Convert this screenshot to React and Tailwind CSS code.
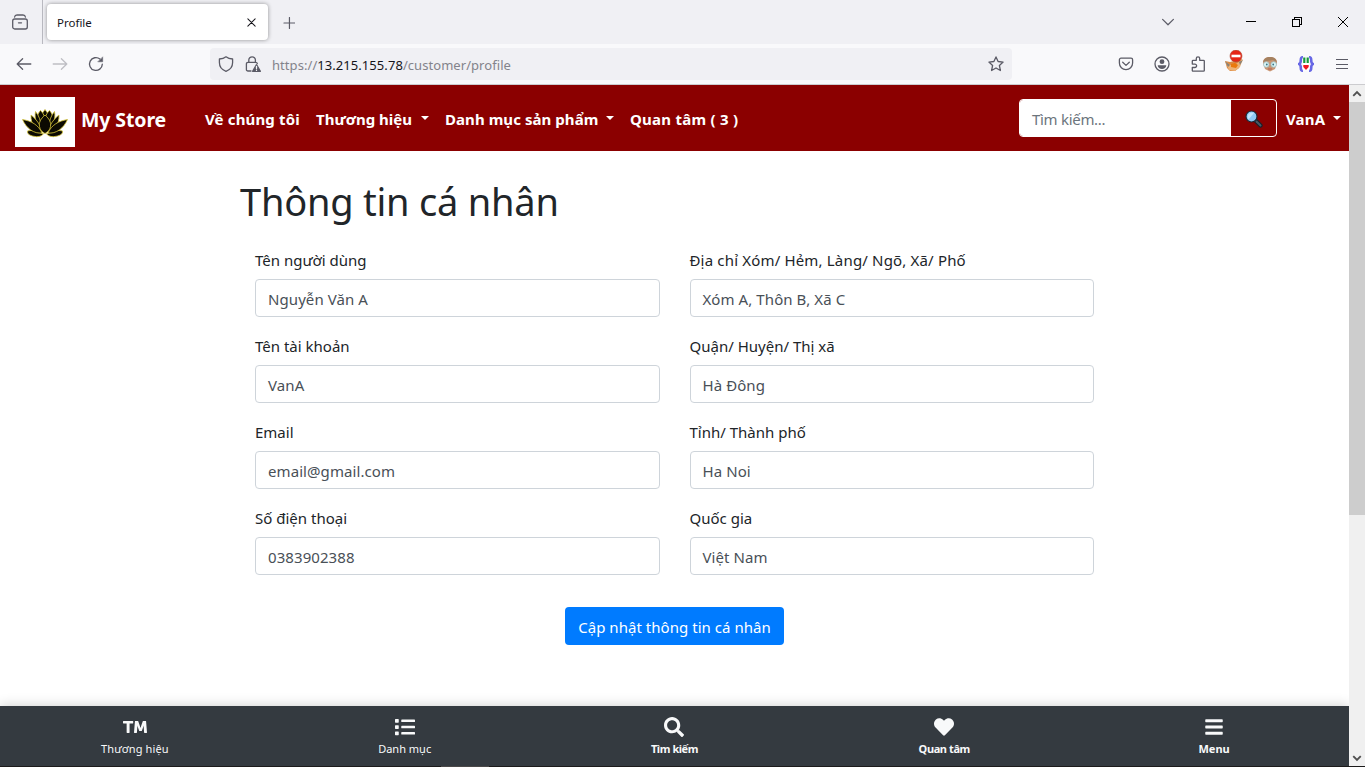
import React from "react";
import { FaTrademark, FaList, FaSearch, FaHeart, FaBars } from "react-icons/fa";

const svgBase = { fill: "none", strokeLinecap: "round", strokeLinejoin: "round" };

function Glyph({ children, className = "w-4 h-4", width = 1.3 }) {
  return (
    <svg viewBox="0 0 16 16" className={"block shrink-0 " + className} stroke="currentColor" strokeWidth={width} {...svgBase}>
      {children}
    </svg>
  );
}

function TabStrip() {
  return (
    <div className="flex h-11 shrink-0 items-center bg-[#f0f0f4] text-[#5b5b66]">
      <div className="flex h-full w-[43px] shrink-0 items-center border-r border-[#b9b9c0] pl-3">
        <Glyph>
          <rect x="0.7" y="5" width="14.6" height="10" rx="2" />
          <path d="M2.6 3C2.800 1.600 3.600 1 5 1h6c1.400 0 2.200.6 2.400 2M6.500 8.800h3" />
        </Glyph>
      </div>
      <div className="ml-[4px] flex h-9 w-[221px] shrink-0 items-center rounded bg-white pl-2.5 pr-3 text-[#15141a] shadow-[0_0_4px_rgba(0,0,0,0.4)]">
        <span className="grow pt-0.5 text-[11.5px] leading-4">Profile</span>
        <Glyph className="h-[9px] w-[9px]" width={1.8}>
          <path d="M1.500 1.500l13 13M14.500 1.500l-13 13" />
        </Glyph>
      </div>
      <Glyph className="ml-[15px] mt-0.5 w-3 h-3" width={1.600}>
        <path d="M8.600 0.700v14.600M1.300 8h14.600" />
      </Glyph>
      <div className="grow" />
      <Glyph className="mr-[72px] w-3 h-3" width={1.6}>
        <path d="M0.800 4.500L8 11.700l7.200-7.200" />
      </Glyph>
      <div className="flex w-[119px] shrink-0 items-center justify-between pr-[17px] text-black">
        <svg viewBox="0 0 10 10" className="h-2.5 w-2.5" stroke="currentColor" fill="none" shapeRendering="crispEdges">
          <path d="M0 4.500h10" />
        </svg>
        <svg viewBox="0 0 10 10" className="h-2.5 w-2.5" stroke="currentColor" fill="none" shapeRendering="crispEdges">
          <path d="M.5 2.500h7v7h-7zM2.500 2.500v-2h7v7h-2" />
        </svg>
        <svg viewBox="0 0 10 10" className="h-2.5 w-2.5" stroke="currentColor" fill="none">
          <path d="M0 0l10 10M10 0L0 10" />
        </svg>
      </div>
    </div>
  );
}

function Toolbar() {
  return (
    <div className="flex h-[41px] shrink-0 items-center border-b border-[#cccccf] bg-[#f9f9fb] text-[#5b5b66]">
      <Glyph className="ml-4 w-4 h-4">
        <path d="M1.200 8h13.600M6.600 2.800L1.200 8l5.400 5.200" />
      </Glyph>
      <Glyph className="ml-5 w-4 h-4 text-[#bebec4]">
        <path d="M1.200 8h13.600M9.400 2.800L14.800 8l-5.400 5.200" />
      </Glyph>
      <Glyph className="ml-5 w-4 h-4">
        <path d="M14.300 8.200A6.400 6.400 0 1 1 12 3.100" />
        <path d="M14.700 1.200v4.600h-4.600z" fill="currentColor" strokeWidth="0.5" />
      </Glyph>
      <div className="ml-[106px] flex h-8 w-[802px] shrink-0 items-center rounded bg-[#f0f0f4] pl-2 pr-2">
        <Glyph>
          <path d="M8 .8C6 2.400 3.800 2.900 1.400 3v3.600c0 4.200 2.500 7.300 6.600 8.700 4.100-1.400 6.600-4.500 6.600-8.700V3C12.200 2.900 10 2.400 8 .8z" />
        </Glyph>
        <Glyph className="ml-[11px] w-4 h-4">
          <path d="M3.800 6.200V4.100a3.300 3.300 0 0 1 6.600 0v2.100M6 15H3c-1 0-1.600-.6-1.600-1.600V8c0-1 .6-1.700 1.600-1.700h7.600c1 0 1.600.5 1.700 1.200" />
          <path d="M11.500 8.700l3.900 6.600H7.600z" fill="currentColor" />
          <path d="M11.500 10.300v2.300M11.500 14.200v.2" stroke="#f0f0f4" />
        </Glyph>
        <span className="ml-[11px] grow pt-0.5 text-[13px] leading-5 tracking-[0.06px] text-[#83838b]">
          https://<span className="text-[#15141a]">13.215.155.78</span>/customer/profile
        </span>
        <Glyph>
          <path d="M8 .9l2.100 4.600 5 .6-3.700 3.400 1 5L8 12l-4.400 2.500 1-5L.9 6.100l5-.6z" />
        </Glyph>
      </div>
      <div className="ml-[106px] flex grow items-center gap-5">
        <Glyph>
          <path d="M3 2.200h10c.9 0 1.600.6 1.600 1.500V7c0 4-3 6.600-6.600 6.600S1.400 11 1.400 7V3.700c0-.9.700-1.500 1.600-1.500zM4.700 6.300L8 9.400l3.300-3.100" />
        </Glyph>
        <Glyph>
          <circle cx="8" cy="8" r="7" />
          <circle cx="8" cy="5.700" r="2.400" fill="currentColor" stroke="none" />
          <path d="M3.700 9.300h8.600c0 2.300-2 3.800-4.300 3.800s-4.300-1.500-4.300-3.800z" fill="currentColor" stroke="none" />
        </Glyph>
        <Glyph>
          <path d="M6.300 4.300V2.500a1.700 1.700 0 0 1 3.400 0v1.800h3.800c.5 0 .8.300.8.800v9.300c0 .5-.3.800-.8.800H3.100c-.5 0-.8-.3-.8-.8V11.500h2.600a1.700 1.700 0 0 0 0-3.400H2.300V5.100c0-.5.300-.8.800-.8z" />
        </Glyph>
        <svg viewBox="0 0 20 22" className="-mx-0.5 -mt-1.5 h-[22px] w-5 shrink-0">
          <path d="M1 11l5 1 12-3-3 9-4 3H6l-3-3z" fill="#dd8b43" />
          <path d="M1 11l5 4 6-1 7-5-3 8-5 4-6-1z" fill="#edb277" />
          <path d="M1 11l5 4-2 2zM19 10l-4 2 1 3z" fill="#8a8175" />
          <path d="M7 14l4-1 3 2-2 3-5-1z" fill="#ea790d" />
          <circle cx="12" cy="6" r="6" fill="#e62516" stroke="#a84d36" strokeWidth="0.6" />
          <path d="M7.500 4.700h9v2.600h-9z" fill="white" />
        </svg>
        <svg viewBox="0 0 16 16" className="h-4 w-4 shrink-0">
          <path d="M1 7C1 3 3.500 1 8 1s7 2 7 6l-2 6-5 2.500L3 13z" fill="#c99572" />
          <path d="M1 6C2 2.500 4 1 8 1s6 1.500 7 5l-4-2-6 1z" fill="#a58160" />
          <circle cx="4.300" cy="8.500" r="2.800" fill="#d9f2f3" stroke="#9dbcc0" strokeWidth="0.8" />
          <circle cx="11.700" cy="8.500" r="2.800" fill="#d9f2f3" stroke="#9dbcc0" strokeWidth="0.8" />
          <circle cx="4.800" cy="8.500" r="0.900" fill="#397786" />
          <circle cx="11.200" cy="8.500" r="0.900" fill="#397786" />
          <path d="M6 13h4" stroke="#b05f54" />
        </svg>
        <svg viewBox="0 0 16 16" className="h-4 w-4 shrink-0">
          <path d="M5 1.200C2.800 1.200 2.800 2 2.800 4S2.800 7.500 1 8c1.800.5 1.800 2 1.800 4s0 2.800 2.200 2.800M11 1.200c2.200 0 2.200.8 2.200 2.800s0 3.500 1.800 4c-1.800.5-1.800 2-1.800 4s0 2.800-2.200 2.800" fill="none" stroke="#6767e5" strokeWidth="2.600" />
          <path d="M4.800 1.500h6.400v13H4.800z" fill="#fff" />
          <path d="M6.300 1.500v5.500M9.700 1.500v5.500" stroke="#159a3b" strokeWidth="2.200" />
          <path d="M5.300 9h5.400v2L8 14l-2.700-3z" fill="#ef1721" />
        </svg>
        <svg viewBox="0 0 12 12" className="ml-0.5 h-3 w-3 shrink-0" stroke="currentColor" shapeRendering="crispEdges">
          <path d="M0 1.500h12M0 6h12M0 10.500h12" />
        </svg>
      </div>
    </div>
  );
}

function Lotus() {
  return (
    <svg viewBox="0 0 60 50" className="mt-1.5 h-[50px] w-[60px] shrink-0 bg-white" fill="#0b0a02" stroke="#d8c63a" strokeWidth="0.8" strokeLinejoin="round">
      <path d="M12.500 34c3-1 8-.5 12 1.500l4 1.300c-2 2.700-6 3.500-10 2.400-3.500-.8-6.500-2-6-5.200z" />
      <path d="M47.500 34c-3-1-8-.5-12 1.500l-4 1.300c2 2.700 6 3.500 10 2.400 3.500-.8 6.500-2 6-5.200z" />
      <path d="M30 12.500l3.500 5-3.500 8-3.500-8z" />
      <path d="M25.500 13.500c2 2 3.500 4 4 7l-4 6-3-7c.3-2.500 1.500-4.500 3-6zM34.500 13.500c-2 2-3.500 4-4 7l4 6 3-7c-.3-2.500-1.500-4.500-3-6z" />
      <path d="M20.500 14.500c3 3.500 5.500 9 6 16-4.500-2.500-7.500-8-6-16zM39.500 14.500c-3 3.500-5.500 9-6 16 4.500-2.500 7.500-8 6-16z" />
      <path d="M16 18c5 4 9.500 9.500 11 16.500-6-1.500-11.500-7-11-16.500zM44 18c-5 4-9.500 9.500-11 16.500 6-1.500 11.500-7 11-16.500z" />
      <path d="M7.500 22.500c9 1.500 16 5.500 19.500 13.500-8 1-15.500-4.500-19.500-13.500zM52.500 22.500c-9 1.500-16 5.500-19.500 13.500 8 1 15.500-4.500 19.500-13.500z" />
      <path d="M30 18c4.500 4 6.200 7.500 5.500 11.500-.5 3.500-2.700 5.500-5.500 7-2.800-1.500-5-3.500-5.500-7-.7-4 1-7.500 5.500-11.500z" />
    </svg>
  );
}

function Caret() {
  return <span className="mt-[-3px] h-0 w-0 shrink-0 border-x-[4.5px] border-t-[4.5px] border-x-transparent border-t-white" />;
}

function Magnifier() {
  return (
    <svg viewBox="0 0 18 18" className="mt-0.5 h-[18px] w-[18px]">
      <path d="M10.500 10.500l5 5" stroke="#17202a" strokeWidth="4.200" strokeLinecap="round" />
      <path d="M11.500 11.500l4 4" stroke="#4b5865" strokeWidth="2" strokeLinecap="round" />
      <circle cx="6.500" cy="6.500" r="5.500" fill="#8fc9f4" stroke="#1c2732" strokeWidth="1.200" />
      <path d="M3.500 9.500l5.500-6.500a4.500 4.500 0 0 0-6.500 4z" fill="#c3e5fb" />
    </svg>
  );
}

function Navbar() {
  return (
    <nav className="flex h-[66px] shrink-0 items-center bg-[#8b0000] pl-[15px] pr-2 pt-0.5 text-[15px] font-bold leading-6 text-white">
      <Lotus />
      <span className="ml-1.5 w-[124px] shrink-0 whitespace-nowrap pt-0.5 text-[19.500px] tracking-[-0.1px]">My Store</span>
      <span className="w-[111px] shrink-0 whitespace-nowrap tracking-[0.15px]">Về chúng tôi</span>
      <span className="flex w-[129px] shrink-0 items-center justify-between whitespace-nowrap pr-4">Thương hiệu <Caret /></span>
      <span className="flex w-[185px] shrink-0 items-center justify-between whitespace-nowrap pr-4 tracking-[0.06px]">Danh mục sản phẩm <Caret /></span>
      <span className="shrink-0 whitespace-nowrap tracking-[0.25px]">Quan tâm ( 3 )</span>
      <div className="grow" />
      <div className="mb-0.5 flex h-[38px] w-[258px] shrink-0 overflow-hidden rounded border border-white font-normal">
        <div className="flex grow items-center bg-white pl-3 pt-0.5 tracking-[-0.3px] text-[#6c757d]">Tìm kiếm...</div>
        <div className="flex w-[45px] items-center justify-center"><Magnifier /></div>
      </div>
      <span className="ml-[9px] flex w-[55px] shrink-0 items-center justify-between tracking-[0.15px]">VanA <Caret /></span>
    </nav>
  );
}

const fields = [
  ["Tên người dùng", "Nguyễn Văn A"],
  ["Địa chỉ Xóm/ Hẻm, Làng/ Ngõ, Xã/ Phố", "Xóm A, Thôn B, Xã C"],
  ["Tên tài khoản", "VanA"],
  ["Quận/ Huyện/ Thị xã", "Hà Đông"],
  ["Email", "email@gmail.com"],
  ["Tỉnh/ Thành phố", "Ha Noi"],
  ["Số điện thoại", "0383902388"],
  ["Quốc gia", "Việt Nam"],
];

function ProfileForm() {
  return (
    <main className="ml-[240px] flex w-[869px] grow flex-col items-center pt-[26px] text-[15px]">
      <h1 className="w-full whitespace-nowrap text-[38px] leading-[48px] tracking-[-0.22px] text-[#212529]">Thông tin cá nhân</h1>
      <div className="mt-[22px] grid w-full grid-cols-2 gap-x-[30px] gap-y-4 px-[15px]">
        {fields.map(([label, value], index) => (
          <div key={label} className="flex h-[70px] flex-col justify-between">
            <div className={"whitespace-nowrap pt-px leading-6 text-[#212529] " + (index === 1 ? "tracking-[0.17px]" : "")}>{label}</div>
            <div className="flex h-[38px] items-center rounded border border-[#ced4da] pl-3 pt-0.5 tracking-[0.08px] text-[#495057]">{value}</div>
          </div>
        ))}
      </div>
      <button className="mt-8 h-[38px] w-[219px] whitespace-nowrap rounded bg-[#007bff] pt-0.5 tracking-[0.04px] text-white">Cập nhật thông tin cá nhân</button>
    </main>
  );
}

const shortcuts = [
  ["Thương hiệu", FaTrademark, "font-normal tracking-[0.15px]", "h-6 w-6"],
  ["Danh mục", FaList, "font-normal", "h-5 w-5"],
  ["Tìm kiếm", FaSearch, "font-bold tracking-[-0.45px]", "h-5 w-5"],
  ["Quan tâm", FaHeart, "font-bold tracking-[-0.4px]", "h-5 w-5"],
  ["Menu", FaBars, "font-bold", "h-5 w-5"],
];

function BottomBar() {
  return (
    <div className="grid h-[60px] shrink-0 grid-cols-5 bg-[#343a40] text-[#f8f9fa] shadow-[0_0_12px_rgba(0,0,0,0.2)]">
      {shortcuts.map(([label, Icon, weight, size]) => (
        <div key={label} className="flex flex-col items-center pt-[9px]">
          <div className="flex h-6 items-center"><Icon className={size} /></div>
          <span className={"mt-[2px] text-[11px] leading-4 " + weight}>{label}</span>
        </div>
      ))}
    </div>
  );
}

function Scrollbar() {
  return (
    <div className="flex w-4 shrink-0 flex-col bg-[#f0f0f0] text-[#505050]">
      <div className="flex h-[17px] items-center justify-center">
        <Glyph className="h-2.5 w-2.5" width={3}><path d="M2 11l6-6 6 6" strokeLinecap="butt" strokeLinejoin="miter" /></Glyph>
      </div>
      <div className="h-[413px] bg-[#cdcdcd]" />
      <div className="grow" />
      <div className="flex h-[17px] items-center justify-center">
        <Glyph className="h-2.5 w-2.5" width={3}><path d="M2 5l6 6 6-6" strokeLinecap="butt" strokeLinejoin="miter" /></Glyph>
      </div>
    </div>
  );
}

export default function App() {
  return (
    <div className="flex h-[767px] w-[1365px] flex-col overflow-hidden bg-white font-['Noto_Sans','Open_Sans',sans-serif]">
      <TabStrip />
      <Toolbar />
      <div className="flex min-h-0 grow">
        <div className="flex w-[1349px] shrink-0 flex-col">
          <Navbar />
          <ProfileForm />
          <BottomBar />
        </div>
        <Scrollbar />
      </div>
      <div className="flex h-px shrink-0 bg-[#1c1b1b]">
        <div className="ml-[441px] w-12 bg-[#4a4848]" />
      </div>
    </div>
  );
}
